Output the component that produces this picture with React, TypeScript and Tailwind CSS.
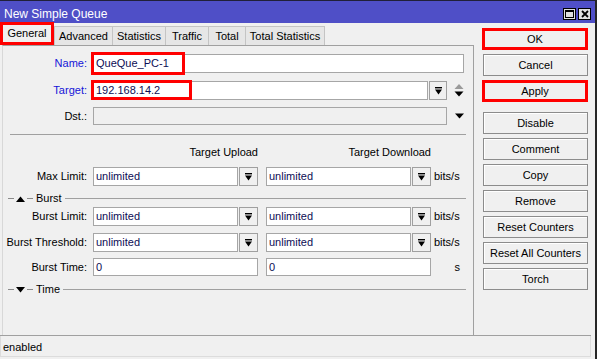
import React from 'react';

const DropIcon = () => (
  <svg width="7" height="8" viewBox="0 0 7 8">
    <rect x="0" y="0" width="7" height="1.4" fill="#000" />
    <polygon points="0,2.6 7,2.6 3.5,7.4" fill="#000" />
  </svg>
);

const DropBtn = () => (
  <div className="w-[19px] h-full border border-[#a0a0a0] bg-[#f0f0f0] flex items-center justify-center shrink-0">
    <DropIcon />
  </div>
);

const Field = ({ value, w, disabled }: { value?: string; w: string; disabled?: boolean }) => (
  <div
    className={`${w} h-full border border-[#a6a6a6] ${disabled ? 'bg-[#f0f0f0]' : 'bg-white'} flex items-center pl-[2px] text-[#0d0d55] shrink-0`}
  >
    {value}
  </div>
);

const Label = ({ text, blue }: { text: string; blue?: boolean }) => (
  <div className={`w-[84px] mr-[6px] text-right shrink-0 ${blue ? 'text-[#1515d8]' : 'text-black'}`}>{text}</div>
);

const LimitRow = ({ label, top }: { label: string; top: string }) => (
  <div className={`flex items-center h-[19px] ${top}`}>
    <Label text={label} />
    <Field value="unlimited" w="w-[145px]" />
    <div className="w-[1px]" />
    <DropBtn />
    <div className="w-[8px]" />
    <Field value="unlimited" w="w-[145px]" />
    <div className="w-[1px]" />
    <DropBtn />
    <div className="pl-[3px] text-black">bits/s</div>
  </div>
);

const Section = ({ title, open, top }: { title: string; open?: boolean; top: string }) => (
  <div className={`flex items-center h-[13px] ml-[5px] mr-[7px] ${top}`}>
    <div className="w-[6px] border-t border-[#8a8a8a]" />
    <svg width="11" height="6" viewBox="0 0 11 6" className="mx-[1px]">
      {open ? <polygon points="1,6 10,6 5.5,0.5" fill="#000" /> : <polygon points="1,0 10,0 5.5,5.5" fill="#000" />}
    </svg>
    <div className="w-[6px] border-t border-[#8a8a8a]" />
    <div className="px-[3px] text-black">{title}</div>
    <div className="flex-1 border-t border-[#a0a0a0]" />
  </div>
);

const SideBtn = ({ text, red, top }: { text: string; red?: boolean; top?: string }) => (
  <div
    className={`h-[22px] flex items-center justify-center text-black bg-[#f0f0f0] ${top ?? ''} ${
      red ? 'border-[3px] border-[#ff0000] w-[106px] -ml-[1px]' : 'border border-[#8c8c8c] w-[105px] shadow-[inset_1px_1px_0_#ffffff]'
    }`}
  >
    {text}
  </div>
);

const tabs = [
  { name: 'Advanced', w: 'w-[58px]' },
  { name: 'Statistics', w: 'w-[53px]' },
  { name: 'Traffic', w: 'w-[43px]' },
  { name: 'Total', w: 'w-[37px]' },
  { name: 'Total Statistics', w: 'w-[80px] border-r' },
];

export default function App() {
  return (
    <div className="w-[597px] h-[359px] bg-[#f0f0f0] flex flex-col border-r-2 border-[#262626] overflow-hidden font-['Liberation_Sans',Arial,sans-serif] text-[11px] leading-none select-none">
      {/* title bar */}
      <div className="h-[23px] shrink-0 bg-[#4f4fc7] border-t border-[#20203a] flex items-center pt-[4px] pl-[4px] pr-[4px]">
        <div className="text-white text-[12px] flex-1">New Simple Queue</div>
        <div className="flex gap-[2px] items-center">
          <div className="w-[13px] h-[12px] bg-[#e0e0e0] border border-black flex items-center justify-center">
            <div className="w-[9px] h-[8px] border border-black border-t-2" />
          </div>
          <div className="w-[13px] h-[12px] bg-[#e0e0e0] border border-black flex items-center justify-center">
            <svg width="8" height="8" viewBox="0 0 8 8">
              <path d="M1 1 L7 7 M7 1 L1 7" stroke="#000" strokeWidth="1.8" />
            </svg>
          </div>
        </div>
      </div>

      {/* body */}
      <div className="flex flex-1 min-h-0">
        <div className="w-[474px] flex flex-col shrink-0">
          {/* tabs */}
          <div className="h-[22px] flex items-end shrink-0">
            <div className="w-[54px] h-[23px] border-[3px] border-[#ff0000] bg-[#f0f0f0] flex items-center justify-center text-black">
              General
            </div>
            {tabs.map((t) => (
              <div
                key={t.name}
                className={`${t.w} h-[19px] border-l border-t border-[#c4c4c4] bg-[#e6e6e6] flex items-center justify-center text-black`}
              >
                {t.name}
              </div>
            ))}
          </div>

          {/* panel */}
          <div className="flex-1 ml-[2px] border-t border-l border-r border-[#a0a0a0] border-l-[#d8d8d8] flex flex-col">
            <div className="flex items-center h-[19px] mt-[8px] relative">
              <Label text="Name:" blue />
              <Field value="QueQue_PC-1" w="w-[371px]" />
              <div className="absolute left-[88px] -top-[2px] w-[94px] h-[23px] border-[3px] border-[#ff0000]" />
            </div>
            <div className="flex items-center h-[19px] mt-[8px] relative">
              <Label text="Target:" blue />
              <Field value="192.168.14.2" w="w-[335px]" />
              <div className="w-[1px]" />
              <div className="w-[18px] h-full border border-[#a0a0a0] bg-[#f0f0f0] flex items-center justify-center">
                <DropIcon />
              </div>
              <svg width="10" height="15" viewBox="0 0 10 15" className="ml-[7px]">
                <polygon points="0.5,6 9.5,6 5,1" fill="#9a9a9a" />
                <polygon points="0.5,8.5 9.5,8.5 5,13.5" fill="#000" />
              </svg>
              <div className="absolute left-[88px] -top-[1px] w-[101px] h-[20px] border-[3px] border-[#ff0000]" />
            </div>
            <div className="flex items-center h-[18px] mt-[7px]">
              <Label text="Dst.:" />
              <Field w="w-[354px]" disabled />
              <svg width="9" height="6" viewBox="0 0 9 6" className="ml-[8px]">
                <polygon points="0,0.5 9,0.5 4.5,5.5" fill="#000" />
              </svg>
            </div>

            <div className="mt-[9px] ml-[7px] mr-[7px] border-t border-[#a0a0a0]" />

            <div className="flex items-center h-[18px] mt-[8px] text-black">
              <div className="w-[90px] shrink-0" />
              <div className="w-[165px] text-right">Target Upload</div>
              <div className="w-[8px]" />
              <div className="w-[165px] text-right">Target Download</div>
            </div>

            <LimitRow label="Max Limit:" top="mt-[6px]" />
            <Section title="Burst" open top="mt-[6px]" />
            <LimitRow label="Burst Limit:" top="mt-[2px]" />
            <LimitRow label="Burst Threshold:" top="mt-[7px]" />
            <div className="flex items-center h-[18px] mt-[6px]">
              <Label text="Burst Time:" />
              <Field value="0" w="w-[165px]" />
              <div className="w-[8px]" />
              <Field value="0" w="w-[165px]" />
              <div className="w-[33px] text-right pr-[4px] text-black">s</div>
            </div>
            <Section title="Time" top="mt-[7px]" />
          </div>
        </div>

        {/* right buttons */}
        <div className="ml-[9px] pt-[5px] flex flex-col gap-[4px]">
          <SideBtn text="OK" red />
          <SideBtn text="Cancel" />
          <SideBtn text="Apply" red />
          <SideBtn text="Disable" top="mt-[6px]" />
          <SideBtn text="Comment" />
          <SideBtn text="Copy" />
          <SideBtn text="Remove" />
          <SideBtn text="Reset Counters" />
          <SideBtn text="Reset All Counters" />
          <SideBtn text="Torch" />
        </div>
      </div>

      {/* status bar */}
      <div className="shrink-0 border-t border-[#a0a0a0] h-[24px] pb-[2px] mr-[4px]">
        <div className="h-full border-l border-r border-b border-[#dcdcdc] flex items-center pl-[2px] pt-[2px] text-black">
          enabled
        </div>
      </div>
    </div>
  );
}
